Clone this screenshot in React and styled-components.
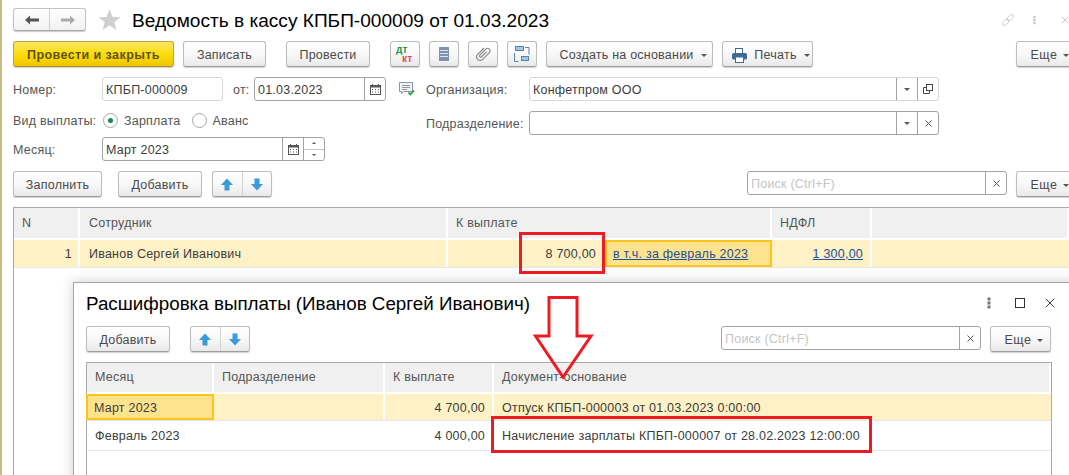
import React from "react";
import styled, { createGlobalStyle } from "styled-components";

const Global = createGlobalStyle`
  html, body { margin: 0; padding: 0; background: #fff; overflow: hidden; }
  body { font-family: "Liberation Sans", Arial, sans-serif; font-size: 12.5px; color: #4a4a4a; }
`;

const Page = styled.div`
  position: relative; width: 1069px; height: 475px; overflow: hidden;
  border-left: 2px solid #c8bb82; box-sizing: border-box; padding: 8px 0 0 11px;
`;
const TitleRow = styled.div`display: flex; align-items: center; height: 23px;`;
const Title = styled.div`font-size: 19.1px; color: #000; white-space: nowrap; margin-left: 11px; padding-top: 2px;`;
const NavGroup = styled.div`
  display: flex; width: 73px; height: 23px; box-sizing: border-box; border: 1px solid #c4c4c4; border-bottom-color: #a8a8a8;
  border-radius: 3px; background: linear-gradient(#fff, #f1f1f1); box-shadow: 0 1px 1px rgba(0,0,0,.2);
`;
const NavCell = styled.div`
  flex: 1; display: flex; align-items: center; justify-content: center;
  & + & { border-left: 1px solid #d2d2d2; }
`;
const StarWrap = styled.div`margin-left: 12px; display: flex;`;
const TopIcons = styled.div`margin-left: auto; display: flex; align-items: center; gap: 19px; width: 67px; flex: none;`;
const ClippedX = styled.div`margin-left: 6px; display: flex;`;

const Toolbar = styled.div`display: flex; align-items: flex-start; margin-top: 10px; height: 26px;`;
const Btn = styled.div`
  height: 26px; width: ${p => p.$w}px; margin-left: ${p => p.$ml || 0}px; flex: none;
  box-sizing: border-box; display: flex; align-items: center; justify-content: center; gap: 8px; padding-top: 2px;
  border: 1px solid #bdbdbd; border-bottom: 1px solid #9e9e9e; border-radius: 3px;
  background: linear-gradient(#fff 0%, #f7f7f7 55%, #e9e9e9 100%);
  box-shadow: 0 1px 1px rgba(0,0,0,.18); color: #4a4a4a; white-space: nowrap; letter-spacing: .22px;
`;
const IconBtn = styled(Btn)`padding-top: 0;`;
const CaretBtn = styled(Btn)`padding-left: 7px; gap: 7px;`;
const MoreBtn = styled(Btn)`padding-left: 6px; gap: 5px; letter-spacing: .6px;`;
const PrimaryBtn = styled(Btn)`
  background: linear-gradient(#fbe766 0%, #fcdc0a 50%, #eec700 100%); border-color: #c2a53a; border-bottom-color: #a78f2a;
  font-weight: bold; color: #5d5322; letter-spacing: .42px;
`;
const Caret = styled.span`
  display: inline-block; width: 0; height: 0; border-left: 3.5px solid transparent; border-right: 3.5px solid transparent;
  border-top: 3.5px solid #555; margin-top: 1px;
`;
const PairBtn = styled.div`
  display: flex; width: 60px; height: 26px; margin-left: ${p => p.$ml || 0}px; box-sizing: border-box; flex: none;
  border: 1px solid #bdbdbd; border-bottom-color: #9e9e9e; border-radius: 3px;
  background: linear-gradient(#fff 0%, #f7f7f7 55%, #e9e9e9 100%); box-shadow: 0 1px 1px rgba(0,0,0,.18);
`;

const Form = styled.div`display: grid; grid-template-columns: 386px 1fr; margin-top: 10px; height: 94px;`;
const Col = styled.div`display: flex; flex-direction: column;`;
const Row = styled.div`display: flex; align-items: center; height: 24px; margin-top: ${p => p.$mt || 0}px;`;
const Label = styled.div`
  width: ${p => p.$w}px; flex: none; white-space: nowrap; color: #555; letter-spacing: .22px; padding-top: 1px;
  margin-left: ${p => p.$ml || 0}px;
`;
const Field = styled.div`
  width: ${p => p.$w}px; height: 24px; flex: none; box-sizing: border-box; display: flex; align-items: center;
  border: 1px solid ${p => p.$soft ? "#d6d6d6" : "#a3a3a3"}; border-radius: 3px; background: #fff; color: #333;
  margin-left: ${p => p.$ml || 0}px; letter-spacing: .22px;
`;
const FieldText = styled.div`
  flex: 1; padding: 1px 0 0 3px; white-space: nowrap; overflow: hidden; color: ${p => p.$ph ? "#c4c4c4" : "#3c3c3c"};
`;
const FieldBtn = styled.div`
  width: 21px; height: 100%; flex: none; display: flex; align-items: center; justify-content: center;
  border-left: 1px solid #a3a3a3; box-sizing: border-box; color: #555; font-size: 11px;
`;
const SpinBtn = styled(FieldBtn)`flex-direction: column; gap: 0;`;
const SpinPart = styled.div`
  flex: 1; width: 100%; display: flex; align-items: center; justify-content: center;
  & + & { border-top: 1px solid #c4c4c4; }
`;
const Tiny = styled.span`
  width: 0; height: 0; border-left: 2px solid transparent; border-right: 2px solid transparent;
  ${p => p.$up ? "border-bottom: 2px solid #555;" : "border-top: 2px solid #555;"}
`;
const Radio = styled.div`
  width: 15px; height: 15px; box-sizing: border-box; border: 1px solid #a8a8a8; border-radius: 50%; flex: none;
  display: flex; align-items: center; justify-content: center; margin-left: ${p => p.$ml || 0}px;
  &::after { content: ""; width: 5px; height: 5px; border-radius: 50%; background: ${p => p.$on ? "#168a50" : "transparent"}; }
`;
const RadioText = styled.div`margin-left: 6px; color: #555; letter-spacing: .22px; padding-top: 1px;`;

const Commands = styled.div`display: flex; height: 26px; align-items: flex-start;`;
const Table = styled.div`
  margin-top: 10px; border-top: 1px solid #a9a9a9; border-left: 1px solid #a9a9a9; box-sizing: border-box;
  width: ${p => p.$w}px; height: ${p => p.$fullH}px; ${p => p.$right && "border-right: 1px solid #a9a9a9;"}
`;
const TRow = styled.div`
  display: grid; grid-template-columns: ${p => p.$cols}; height: ${p => p.$h}px; background: ${p => p.$bg || "transparent"};
  border-bottom: ${p => p.$bb || "none"}; box-sizing: border-box; padding-top: ${p => p.$pt || 0}px;
  ${p => p.$bg && "background-clip: content-box;"}
`;
const Th = styled.div`
  background: #f0f0f0; display: flex; align-items: center; padding: 0 0 1px ${p => p.$pl || 8}px; color: #555; white-space: nowrap;
  border-right: 2px solid #fff; box-sizing: border-box; letter-spacing: .22px;
`;
const Td = styled.div`
  display: flex; align-items: center; box-sizing: border-box; white-space: nowrap; color: #3c3c3c; letter-spacing: .22px;
  justify-content: ${p => p.$r ? "flex-end" : "flex-start"};
  padding: ${p => p.$r ? `1px ${p.$pr ?? 7}px 0 0` : `1px 0 0 ${p.$pl || 8}px`};
  border-right: 2px solid ${p => p.$sep || "transparent"};
  ${p => p.$sel && "background: #fee38f; outline: 2px solid #fbc51c; outline-offset: -2px; margin-left: -1px;"}
`;
const A = styled.span`color: #1f4e9a; text-decoration: underline;`;

const Dialog = styled.div`
  position: absolute; left: 71px; top: 282px; width: 1010px; height: 210px; background: #fff; box-sizing: border-box;
  border: 1px solid #a8a8a8; box-shadow: 0 0 12px rgba(0,0,0,.2); padding: 0 0 0 12px;
`;
const DTitleRow = styled.div`display: flex; align-items: center; height: 41px;`;
const DTitle = styled.div`font-size: 18.8px; color: #000; white-space: nowrap;`;
const DIcons = styled.div`position: absolute; left: 913px; top: 14px; display: flex; align-items: center;`;
const DGap = styled.div`margin-left: ${p => p.$ml}px; display: flex;`;
const DBar = styled.div`display: flex; height: 26px; align-items: flex-start; margin-top: 2px;`;

const Mark = styled.div`
  position: absolute; left: ${p => p.$x}px; top: ${p => p.$y}px; width: ${p => p.$w}px; height: ${p => p.$h}px;
  border: 3px solid #ed1c24; box-sizing: border-box;
`;
const ArrowSvg = styled.svg`position: absolute; left: 531px; top: 295px;`;

const Back = ({ c }) => (
  <svg width="16" height="12" viewBox="0 0 16 12"><path d="M1 6 L6 1.5 V4.5 H15 V7.5 H6 V10.5 Z" fill={c} /></svg>
);
const Fwd = ({ c }) => (
  <svg width="16" height="12" viewBox="0 0 16 12"><path d="M15 6 L10 1.5 V4.5 H1 V7.5 H10 V10.5 Z" fill={c} /></svg>
);
const Star = () => (
  <svg width="23" height="22" viewBox="0 0 23 22"><path d="M11.5 0.5 L14.6 8 L22.5 8.3 L16.3 13.2 L18.5 21 L11.5 16.6 L4.5 21 L6.7 13.2 L0.5 8.3 L8.4 8 Z" fill="#d0d0d0" /></svg>
);
const Cal = () => (
  <svg width="11" height="11" viewBox="0 0 11 11"><rect x="0.5" y="1.5" width="10" height="9" fill="none" stroke="#555" /><rect x="0.5" y="1.5" width="10" height="2" fill="#555" /><rect x="2" y="0" width="1" height="2" fill="#555" /><rect x="8" y="0" width="1" height="2" fill="#555" /><path d="M2 5h1v1H2zM5 5h1v1H5zM8 5h1v1H8zM2 7.5h1v1H2zM5 7.5h1v1H5zM8 7.5h1v1H8z" fill="#555" /></svg>
);
const UpArrow = () => (
  <svg width="12" height="13" viewBox="0 0 12 13"><path d="M6 0.5 L12 7 H8.5 V12.5 H3.5 V7 H0 Z" fill="#3b9ad9" /></svg>
);
const DownArrow = () => (
  <svg width="12" height="13" viewBox="0 0 12 13"><path d="M6 12.5 L12 6 H8.5 V0.5 H3.5 V6 H0 Z" fill="#3b9ad9" /></svg>
);
const Arrows = ({ ml }) => (
  <PairBtn $ml={ml}>
    <NavCell><UpArrow /></NavCell>
    <NavCell><DownArrow /></NavCell>
  </PairBtn>
);
const DtKt = () => (
  <svg width="20" height="20" viewBox="0 0 20 20">
    <text x="1" y="9" fontSize="10" fontWeight="bold" fontFamily="Liberation Sans" fill="#1c9a48">дт</text>
    <text x="7" y="18" fontSize="10" fontWeight="bold" fontFamily="Liberation Sans" fill="#e5484d">кт</text>
  </svg>
);
const ListIcon = () => (
  <svg width="10" height="14" viewBox="0 0 10 14"><rect width="10" height="14" rx="0.5" fill="#7d93ad" /><path d="M1 3.5h8M1 6.5h8M1 9.5h8" stroke="#dde5ee" /></svg>
);
const Clip = () => (
  <svg width="18" height="18" viewBox="0 0 18 18" fill="none" stroke="#8a8a8a" strokeWidth="1.2">
    <g transform="rotate(45 9 9)"><path d="M5.5 4v9a3.5 3.5 0 0 0 7 0V3.5a2.5 2.5 0 0 0-5 0V12a1.2 1.2 0 0 0 2.4 0V5" /></g>
  </svg>
);
const Struct = () => (
  <svg width="16" height="16" viewBox="0 0 16 16" fill="none">
    <rect x="1.5" y="0.5" width="8" height="4" fill="#a9c4de" stroke="#4e86b8" />
    <rect x="7.5" y="10.5" width="7" height="4" fill="#a9c4de" stroke="#4e86b8" />
    <path d="M11 1.5h4v7M.5 7v8.5h4" stroke="#4e86b8" />
  </svg>
);
const Printer = () => (
  <svg width="15" height="15" viewBox="0 0 15 15"><rect x="3.5" y="0.5" width="7" height="5" fill="#fff" stroke="#3f6a96" /><rect x="0" y="5" width="15" height="6.5" rx="1.5" fill="#3f6a96" /><rect x="3.5" y="9" width="8" height="5.5" fill="#fff" stroke="#3f6a96" /></svg>
);
const DocCheck = () => (
  <svg width="16" height="14" viewBox="0 0 16 14"><path d="M.5.5h13v9H4.5l-2 2v-2H.5z" fill="#f4f4f6" stroke="#8a93a3" /><path d="M3 3.5h8M3 5.5h8M3 7.5h5" stroke="#8a93a3" /><path d="M9.5 10.5l2 2 3.5-4" fill="none" stroke="#27a03d" strokeWidth="1.8" /></svg>
);
const LinkIcon = () => (
  <svg width="16" height="16" viewBox="0 0 22 22" fill="none" stroke="#bcbcbc" strokeWidth="1.3">
    <g transform="rotate(-45 11 11)">
      <rect x="-2" y="7.5" width="14" height="7" rx="3.5" />
      <rect x="10" y="7.5" width="14" height="7" rx="3.5" />
    </g>
  </svg>
);
const Dots = ({ c }) => (
  <svg width="4" height="12" viewBox="0 0 4 12"><path d="M.5.5h3v3h-3zM.5 4.5h3v3h-3zM.5 8.5h3v3h-3z" fill={c} /></svg>
);
const Open = () => (
  <svg width="10" height="10" viewBox="0 0 10 10" fill="none" stroke="#444"><rect x="3.5" y="0.5" width="6" height="6" /><path d="M3.5 3.5H.5v6h6V6.5" /></svg>
);
const X = ({ s = 7, c = "#555" }) => (
  <svg width={s} height={s} viewBox="0 0 7 7"><path d="M.5.5l6 6M6.5.5l-6 6" stroke={c} fill="none" strokeWidth={s > 7 ? 0.7 : 1} /></svg>
);

const mainCols = "66px 368px 324px 100px 1fr";
const dCols = "127px 171px 109px 1fr";

export default function App() {
  return (
    <Page>
      <Global />
      <TitleRow>
        <NavGroup>
          <NavCell><Back c="#555" /></NavCell>
          <NavCell><Fwd c="#aaa" /></NavCell>
        </NavGroup>
        <StarWrap><Star /></StarWrap>
        <Title>Ведомость в кассу КПБП-000009 от 01.03.2023</Title>
        <TopIcons><LinkIcon /><Dots c="#c4c4c4" /><ClippedX><X s={8} c="#bbb" /></ClippedX></TopIcons>
      </TitleRow>

      <Toolbar>
        <PrimaryBtn $w={161}>Провести и закрыть</PrimaryBtn>
        <Btn $w={83} $ml={9}>Записать</Btn>
        <Btn $w={84} $ml={20}>Провести</Btn>
        <IconBtn $w={30} $ml={20}><DtKt /></IconBtn>
        <IconBtn $w={30} $ml={9}><ListIcon /></IconBtn>
        <IconBtn $w={30} $ml={9}><Clip /></IconBtn>
        <IconBtn $w={30} $ml={9}><Struct /></IconBtn>
        <CaretBtn $w={167} $ml={9}>Создать на основании <Caret /></CaretBtn>
        <CaretBtn $w={91} $ml={9}><Printer /> Печать <Caret /></CaretBtn>
        <MoreBtn $w={61} $ml={203}>Еще <Caret /></MoreBtn>
      </Toolbar>

      <Form>
        <Col>
          <Row>
            <Label $w={89}>Номер:</Label>
            <Field $w={121} $soft><FieldText>КПБП-000009</FieldText></Field>
            <Label $w={21} $ml={10}>от:</Label>
            <Field $w={132}>
              <FieldText>01.03.2023</FieldText>
              <FieldBtn><Cal /></FieldBtn>
            </Field>
          </Row>
          <Row $mt={7}>
            <Label $w={89}>Вид выплаты:</Label>
            <Radio $on $ml={1} />
            <RadioText>Зарплата</RadioText>
            <Radio $ml={11} />
            <RadioText>Аванс</RadioText>
          </Row>
          <Row $mt={5}>
            <Label $w={89}>Месяц:</Label>
            <Field $w={223}>
              <FieldText>Март 2023</FieldText>
              <FieldBtn><Cal /></FieldBtn>
              <SpinBtn>
                <SpinPart><Tiny $up /></SpinPart>
                <SpinPart><Tiny /></SpinPart>
              </SpinBtn>
            </Field>
          </Row>
        </Col>
        <Col>
          <Row>
            <DocCheck />
            <Label $w={103} $ml={11}>Организация:</Label>
            <Field $w={410} $soft>
              <FieldText>Конфетпром ООО</FieldText>
              <FieldBtn><Caret /></FieldBtn>
              <FieldBtn><Open /></FieldBtn>
            </Field>
          </Row>
          <Row $mt={10}>
            <Label $w={103} $ml={27}>Подразделение:</Label>
            <Field $w={410}>
              <FieldText />
              <FieldBtn><Caret /></FieldBtn>
              <FieldBtn><X /></FieldBtn>
            </Field>
          </Row>
        </Col>
      </Form>

      <Commands>
        <Btn $w={89}>Заполнить</Btn>
        <Btn $w={84} $ml={16}>Добавить</Btn>
        <Arrows ml={10} />
        <Field $w={260} $ml={475}>
          <FieldText $ph>Поиск (Ctrl+F)</FieldText>
          <FieldBtn><X /></FieldBtn>
        </Field>
        <MoreBtn $w={61} $ml={9}>Еще <Caret /></MoreBtn>
      </Commands>

      <Table $w={1056} $fullH={270}>
        <TRow $cols={mainCols} $h={30}>
          <Th>N</Th><Th $pl={9}>Сотрудник</Th><Th>К выплате</Th><Th>НДФЛ</Th><Th />
        </TRow>
        <TRow $cols="66px 368px 158px 166px 100px 1fr" $h={30} $pt={2} $bg="#fdf1c5" $bb="1px solid #e6e6e6">
          <Td $r $pr={6} $sep="#fff">1</Td>
          <Td $pl={9} $sep="#fff">Иванов Сергей Иванович</Td>
          <Td $r $pr={8}>8 700,00</Td>
          <Td $sel><A>в т.ч. за февраль 2023</A></Td>
          <Td $r $sep="#fff"><A>1 300,00</A></Td>
          <Td />
        </TRow>
      </Table>

      <Dialog>
        <DTitleRow><DTitle>Расшифровка выплаты (Иванов Сергей Иванович)</DTitle></DTitleRow>
        <DIcons>
          <Dots c="#777" />
          <DGap $ml={24}>
            <svg width="10" height="10" viewBox="0 0 10 10"><rect x="0.5" y="0.5" width="9" height="9" fill="none" stroke="#333" /></svg>
          </DGap>
          <DGap $ml={20}><X s={10} c="#444" /></DGap>
        </DIcons>
        <DBar>
          <Btn $w={84}>Добавить</Btn>
          <Arrows ml={20} />
          <Field $w={260} $ml={471}>
            <FieldText $ph>Поиск (Ctrl+F)</FieldText>
            <FieldBtn><X /></FieldBtn>
          </Field>
          <MoreBtn $w={61} $ml={9}>Еще <Caret /></MoreBtn>
        </DBar>
        <Table $w={966} $fullH={120} $right>
          <TRow $cols={dCols} $h={29}>
            <Th>Месяц</Th><Th>Подразделение</Th><Th>К выплате</Th><Th>Документ-основание</Th>
          </TRow>
          <TRow $cols={dCols} $h={29} $pt={2} $bg="#fdf1c5" $bb="1px solid #e6e6e6">
            <Td $sel>Март 2023</Td>
            <Td $sep="#fff" />
            <Td $r $sep="#fff">4 700,00</Td>
            <Td>Отпуск КПБП-000003 от 01.03.2023 0:00:00</Td>
          </TRow>
          <TRow $cols={dCols} $h={30} $bb="1px solid #e6e6e6">
            <Td>Февраль 2023</Td>
            <Td />
            <Td $r>4 000,00</Td>
            <Td>Начисление зарплаты КПБП-000007 от 28.02.2023 12:00:00</Td>
          </TRow>
        </Table>
      </Dialog>

      <Mark $x={517} $y={232} $w={86} $h={42} />
      <Mark $x={489} $y={416} $w={381} $h={37} />
      <ArrowSvg width="62" height="86" viewBox="0 0 62 86">
        <path d="M16 2.5 H44 V41 H58 L30 82 L2.5 41 H16 Z" fill="none" stroke="#ed1c24" strokeWidth="3" />
      </ArrowSvg>
    </Page>
  );
}
